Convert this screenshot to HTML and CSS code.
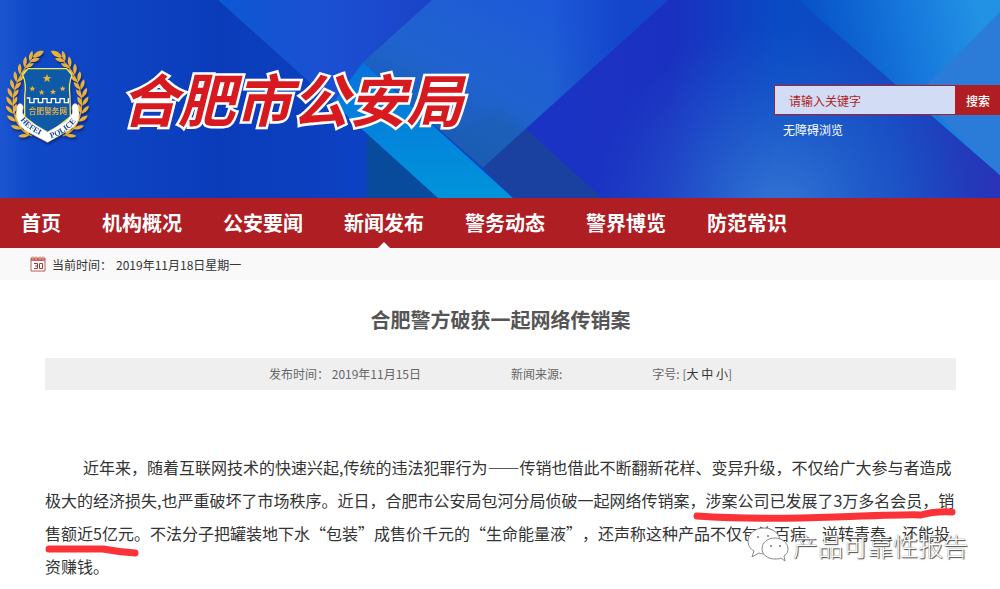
FILE: index.html
```html
<!DOCTYPE html>
<html lang="zh-CN">
<head>
    <meta charset="UTF-8">
    <meta name="viewport" content="width=device-width, initial-scale=1.0">
    <title>合肥警方破获一起网络传销案</title>
    <link rel="stylesheet" href="styles.css">
</head>
<body>

    <header class="header">
        <svg class="header-bg" viewBox="0 0 1000 198" preserveAspectRatio="none" aria-hidden="true">
            <defs>
                <linearGradient id="base" x1="0" x2="1" y1="0" y2="0">
                    <stop offset="0" stop-color="#1c55cf"/>
                    <stop offset=".03" stop-color="#1049c8"/>
                    <stop offset=".22" stop-color="#0a3cba"/>
                    <stop offset=".4" stop-color="#0d43c4"/>
                    <stop offset="1" stop-color="#0d43c4"/>
                </linearGradient>
                <linearGradient id="top" x1="0" x2="1" y1="0" y2="0">
                    <stop offset="0" stop-color="#0d58d4"/>
                    <stop offset=".5" stop-color="#1b50d2"/>
                    <stop offset="1" stop-color="#1b43c8"/>
                </linearGradient>
                <linearGradient id="band" x1="0" x2="0" y1="0" y2="1">
                    <stop offset="0" stop-color="#0872dc"/>
                    <stop offset="1" stop-color="#0094da"/>
                </linearGradient>
                <linearGradient id="mid" gradientUnits="userSpaceOnUse" x1="540" x2="450" y1="0" y2="180">
                    <stop offset="0" stop-color="#1d59d8"/>
                    <stop offset=".5" stop-color="#2063cf"/>
                    <stop offset="1" stop-color="#175aa8"/>
                </linearGradient>
                <linearGradient id="edge" gradientUnits="userSpaceOnUse" x1="550" x2="620" y1="0" y2="0">
                    <stop offset="0" stop-color="#1446cc" stop-opacity="0"/>
                    <stop offset="1" stop-color="#1446cc"/>
                </linearGradient>
                <linearGradient id="violet" gradientUnits="userSpaceOnUse" x1="560" x2="1000" y1="0" y2="0">
                    <stop offset="0" stop-color="#1b33c4"/>
                    <stop offset=".25" stop-color="#1a30c0"/>
                    <stop offset=".5" stop-color="#084bc4"/>
                    <stop offset=".75" stop-color="#1447c0"/>
                    <stop offset="1" stop-color="#2934b8"/>
                </linearGradient>
                <radialGradient id="glow" gradientUnits="userSpaceOnUse" cx="780" cy="210" r="190">
                    <stop offset="0" stop-color="#3574d4"/>
                    <stop offset=".4" stop-color="#3070d2" stop-opacity=".55"/>
                    <stop offset="1" stop-color="#2560d0" stop-opacity="0"/>
                </radialGradient>
                <linearGradient id="sky" gradientUnits="userSpaceOnUse" x1="810" x2="980" y1="60" y2="20">
                    <stop offset="0" stop-color="#0650c6"/>
                    <stop offset=".6" stop-color="#1678dc"/>
                    <stop offset="1" stop-color="#2292e4"/>
                </linearGradient>
            </defs>
            <rect width="1000" height="198" fill="url(#base)"/>
            <path d="M367 134L438 198H367Z" fill="#084a9c"/>
            <path d="M218 0H432L363 62L333 103Z" fill="url(#top)"/>
            <path d="M432 0H668L500 152L483 168L363 62Z" fill="url(#mid)"/>
            <path d="M432 0H668L500 152L483 168L363 62Z" fill="url(#edge)"/>
            <path d="M668 0H1000V198H513L483 168Z" fill="url(#violet)"/>
            <path d="M668 0H1000V198H513L483 168Z" fill="url(#glow)"/>
            <path d="M500 152L526 129L602 198H513L483 168Z" fill="#1a419f"/>
            <path d="M363 62L513 198H438L333 103Z" fill="url(#band)"/>
            <path d="M500 108L526 129L483 168L450 138Z" fill="#1b5fae" opacity=".4"/>
            <path d="M798 0H1000V175Z" fill="url(#sky)"/>
            <path d="M1000 12V175L917 95Z" fill="#2a7cd8"/>
        </svg>

        <div class="brand">
            <svg class="emblem" viewBox="18 21 252 300" role="img" aria-label="合肥警务网">
                <defs>
                    <g id="leaf">
                        <path d="M0 4C-13 -2 -19 -12 -17 -24C-6 -19 0 -9 0 4Z"/>
                        <path d="M0 4C13 -2 17 -12 15 -23C5 -18 0 -9 0 4Z"/>
                    </g>
                    <path id="star" d="M0 -13L3.500 -4H13L5.500 2L8 11L0 5.500L-8 11L-5.500 2L-13 -4H-3.500Z"/>
                    <g id="branch">
                        <path d="M95 288C20 260 15 120 118 42" fill="none" stroke="#d99c2b" stroke-width="4"/>
                        <use href="#leaf" transform="translate(84 284) rotate(-62)"/>
                        <use href="#leaf" transform="translate(61 264) rotate(-42)"/>
                        <use href="#leaf" transform="translate(47 241) rotate(-26)"/>
                        <use href="#leaf" transform="translate(39 217) rotate(-12)"/>
                        <use href="#leaf" transform="translate(37 193) rotate(-2)"/>
                        <use href="#leaf" transform="translate(38 169) rotate(6)"/>
                        <use href="#leaf" transform="translate(43 145) rotate(14)"/>
                        <use href="#leaf" transform="translate(51 122) rotate(22)"/>
                        <use href="#leaf" transform="translate(62 100) rotate(30)"/>
                        <use href="#leaf" transform="translate(76 79) rotate(38)"/>
                        <use href="#leaf" transform="translate(92 61) rotate(45)"/>
                        <path d="M98 52C104 36 118 31 131 33C127 47 114 54 98 52Z"/>
                    </g>
                    <path id="motto-left" d="M61 240Q84 272 140 294"/>
                    <path id="motto-right" d="M153 295Q206 277 234 236"/>
                </defs>
                <g fill="#e9b03c">
                    <use href="#branch"/>
                    <use href="#branch" transform="translate(284 0) scale(-1 1)"/>
                </g>
                <path d="M84 86H200L216 105Q205 130 210 170L211 230L142 284L74 230V170Q80 130 68 105Z" fill="#0f5aa6" stroke="#f3ea5a" stroke-width="4"/>
                <g fill="#f4b32e">
                    <use href="#star" transform="translate(141 115)"/>
                    <use href="#star" transform="translate(97 146) scale(.7)"/>
                    <use href="#star" transform="translate(125 157) scale(.7)"/>
                    <use href="#star" transform="translate(159 156) scale(.7)"/>
                    <use href="#star" transform="translate(188 146) scale(.7)"/>
                </g>
                <path d="M80 174H89V188H102V176H115V188H128V176H141V188H154V176H167V188H180V176H193V188H205V175" fill="none" stroke="#fff" stroke-width="4"/>
                <text class="emblem-name" x="144" y="221">合肥警务网</text>
                <path d="M51 205C50 190 66 186 69 199C71 209 64 214 69 222C84 248 117 259 143 276C170 259 202 248 216 222C221 214 214 209 217 199C220 186 236 190 235 205C240 235 236 256 203 272L143 307L86 277C51 257 47 236 51 205Z" fill="#fff" stroke="#f3e2a0" stroke-width="2"/>
                <text class="emblem-motto"><textPath href="#motto-left">HEFEI</textPath></text>
                <text class="emblem-motto"><textPath href="#motto-right">POLICE</textPath></text>
            </svg>
            <div class="site-name">合肥市公安局</div>
        </div>

        <div class="tools">
            <form class="search">
                <input class="search-input" type="text" placeholder="请输入关键字" aria-label="请输入关键字">
                <button class="search-btn" type="button">搜索</button>
            </form>
            <a class="access" href="#">无障碍浏览</a>
        </div>
    </header>

    <nav class="nav">
        <a href="#">首页</a>
        <a href="#">机构概况</a>
        <a href="#">公安要闻</a>
        <a class="active" href="#">新闻发布</a>
        <a href="#">警务动态</a>
        <a href="#">警界博览</a>
        <a href="#">防范常识</a>
    </nav>

    <div class="datebar">
        <svg class="calendar" viewBox="0 0 16 16" aria-hidden="true">
            <path d="M1 2H15V15H1Z" fill="#fff" stroke="#bd5a55"/>
            <path d="M1 2H15V5H1Z" fill="#c9625d"/>
            <path d="M3 0V4M6 0V4M10 0V4M13 0V4" stroke="#e3a6a2"/>
            <path d="M4 7.500H7.500V12.500H4M5 10H7.500M9.500 7.500H12.500V12.500H9.500Z" fill="none" stroke="#a8322e"/>
        </svg>
        <span>当前时间：</span>
        <span>2019年11月18日星期一</span>
    </div>

    <main class="article">
        <h1>合肥警方破获一起网络传销案</h1>
        <div class="meta">
            <span>发布时间： 2019年11月15日</span>
            <span>新闻来源:</span>
            <span>字号: [<a href="#">大</a> <a href="#">中</a> <a href="#">小</a>]</span>
        </div>
        <div class="content">
            <p>近年来，随着互联网技术的快速兴起,传统的违法犯罪行为——传销也借此不断翻新花样、变异升级，不仅给广大参与者造成极大的经济损失,也严重破坏了市场秩序。近日，合肥市公安局包河分局侦破一起网络传销案，涉案公司已发展了3万多名会员，销售额近5亿元。不法分子把罐装地下水“包装”成售价千元的“生命能量液”，还声称这种产品不仅包治百病、逆转青春，还能投资赚钱。</p>

            <!-- 红笔标注 -->
            <svg class="pen" viewBox="0 0 911 132" aria-hidden="true">
                <path d="M652 65Q710 69 790 66T876 64Q890 60 907 61"/>
                <path d="M4 98H58Q74 101 90 102"/>
            </svg>

            <!-- 水印 -->
            <div class="watermark">
                <svg class="wechat" viewBox="0 0 42 36" aria-hidden="true">
                    <path d="M17 1C8 1 1 7 1 14C1 18 3 22 7 24L5 30L12 26C14 27 17 27 19 27C29 27 33 20 33 14C33 7 26 1 17 1Z"/>
                    <path d="M28 11C20 11 15 16 15 22C15 28 21 32 28 32C30 32 32 32 34 31L38 34L37 29C40 27 41 25 41 22C41 16 35 11 28 11Z"/>
                    <g class="eyes">
                        <circle cx="11" cy="10" r="1"/>
                        <circle cx="21" cy="9" r="1"/>
                        <circle cx="24" cy="19" r="1"/>
                        <circle cx="33" cy="19" r="1"/>
                    </g>
                </svg>
                <span>产品可靠性报告</span>
            </div>
        </div>
    </main>

</body>
</html>
```

FILE: styles.css
```css
* {
    box-sizing: border-box;
}
body {
    margin: 0;
    background: #fff;
    color: #333;
    font-family: "Noto Sans CJK SC", sans-serif;
    font-size: 12px;
    text-spacing-trim: space-all;
    overflow-x: hidden;
}
a {
    color: inherit;
    text-decoration: none;
}

/* 头部 */
.header {
    position: relative;
    display: flex;
    justify-content: space-between;
    height: 198px;
}
.header-bg {
    position: absolute;
    inset: 0;
    width: 100%;
    height: 100%;
    z-index: -1;
}
.brand {
    display: flex;
    align-items: flex-start;
    gap: 31px;
    padding: 47px 0 0 6px;
}
.emblem {
    width: 84px;
    height: 100px;
    filter: drop-shadow(1px 2px 1px rgba(0,0,0,0.4));
}
.emblem-name {
    font-size: 23px;
    font-weight: bold;
    fill: #e0a94a;
    text-anchor: middle;
}
.emblem-motto {
    font-family: "Liberation Serif", serif;
    font-size: 24px;
    font-weight: bold;
    fill: #17479e;
}
.site-name {
    color: #d71a20;
    font-size: 57px;
    font-weight: 700;
    font-style: italic;
    line-height: 100px;
    -webkit-text-stroke: 5px #fff;
    paint-order: stroke fill;
}
.tools {
    padding-top: 85px;
}
.search {
    display: flex;
}
.search-input {
    width: 182px;
    height: 30px;
    padding: 0 14px;
    border: 1px solid #b01e23;
    border-radius: 0;
    background: #d2dcf5;
    font-family: inherit;
    font-size: 12px;
}
.search-input::placeholder {
    color: #b01e23;
    opacity: 1;
}
.search-btn {
    width: 44px;
    height: 30px;
    padding: 0;
    border: 0;
    background: #b01e23;
    color: #fff;
    font-family: inherit;
    font-size: 12px;
    font-weight: 500;
}
.access {
    display: block;
    padding-left: 9px;
    color: #fff;
    line-height: 30px;
}

/* 导航 */
.nav {
    display: flex;
    gap: 41px;
    padding-left: 21px;
    background: #ae1e23;
    color: #fff;
    font-size: 20px;
    font-weight: bold;
    line-height: 50px;
}
.nav a {
    position: relative;
}
.nav .active::after {
    content: "";
    position: absolute;
    left: 50%;
    bottom: 0;
    margin-left: -6px;
    border: 6px solid transparent;
    border-top: 0;
    border-bottom-color: #fff;
}
.datebar {
    display: flex;
    align-items: center;
    gap: 4px;
    height: 32px;
    padding-left: 30px;
    background: #f9f9f9;
}
.calendar {
    width: 16px;
    height: 16px;
    margin-right: 2px;
}

/* 正文 */
.article {
    padding: 0 44px 10px 45px;
}
.article h1 {
    margin: 0;
    padding: 25px 0 23px;
    color: #555;
    font-size: 20px;
    line-height: 30px;
    text-align: center;
}
.meta {
    display: flex;
    justify-content: center;
    gap: 90px;
    background: #efefef;
    color: #666;
    line-height: 32px;
}
.meta a {
    color: #333;
}
.content {
    position: relative;
    margin-top: 61px;
    font-size: 16px;
    line-height: 33px;
}
.content p {
    margin: 0;
    text-indent: 38px;
}
.pen {
    position: absolute;
    top: 0;
    left: 0;
    width: 100%;
}
.pen path {
    fill: none;
    stroke: #fb3237;
    stroke-width: 7;
    stroke-linecap: round;
}
.watermark {
    position: absolute;
    right: -12px;
    top: 76px;
    display: flex;
    align-items: center;
    gap: 4px;
    color: #fff;
    font-size: 25px;
    font-weight: 300;
    line-height: 36px;
    text-shadow: 1px 1px 1px #444, 0 0 1px #777;
}
.wechat {
    width: 42px;
    height: 36px;
    fill: #fff;
    stroke: #888;
}
.eyes {
    fill: #777;
    stroke: none;
}
```
